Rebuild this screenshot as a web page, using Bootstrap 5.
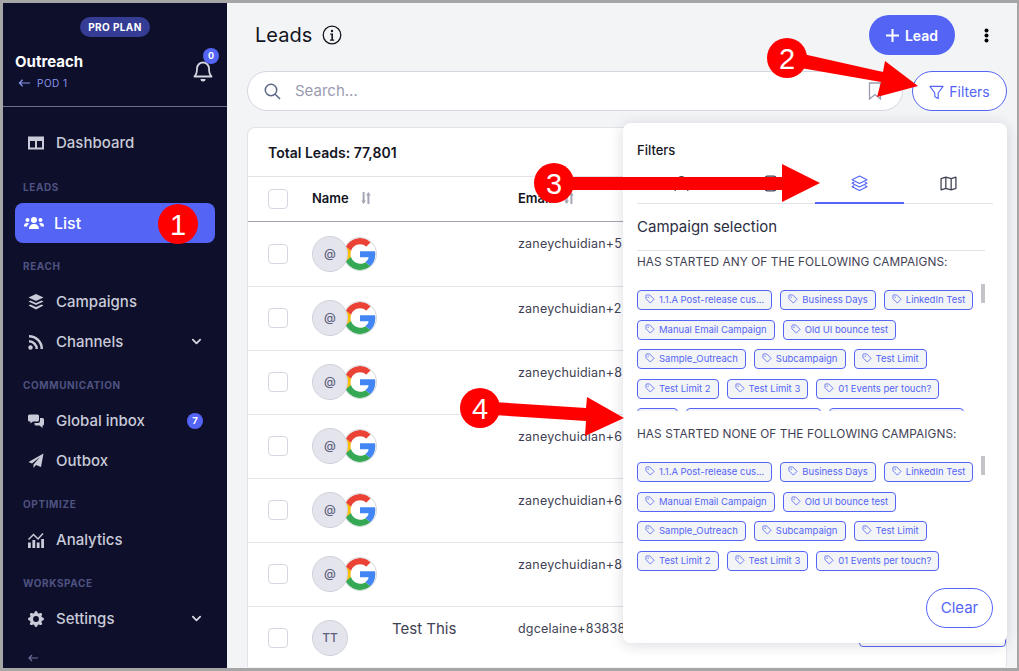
<!DOCTYPE html>
<html lang="en">
<head>
  <meta charset="UTF-8" />
  <meta name="viewport" content="width=device-width, initial-scale=1" />
  <title>Leads</title>
  <link href="https://cdn.jsdelivr.net/npm/bootstrap@5.3.3/dist/css/bootstrap.min.css" rel="stylesheet">
  <style>
    html, body { height: 100%; }
    body {
      font-family: Inter, "Liberation Sans", sans-serif;
      background-color: #a6a6a6;
      padding: 3px 2px 3px 3px;
      overflow: hidden;
      color: #14151f;
    }

    .app-frame { height: 665px; position: relative; overflow: hidden; background: #f3f4f6; }
    .symbol-sheet { position: absolute; width: 0; height: 0; }

    /* sidebar */
    .side-bar { width: 224px; flex: none; background: #0d0f2b; color: #c9cbd8; }
    .plan-pill {
      background: #343c94; color: #fff; font-size: 10px; font-weight: 700; letter-spacing: .4px;
      width: 70px; height: 20px; border-radius: 10px; margin-top: 14px;
    }
    .org-head { height: 70px; padding: 15px 12px 0 12px; border-bottom: 1px solid #6d6f84; margin-bottom: 1px; }
    .org-name { font-size: 15px; font-weight: 700; color: #fff; line-height: 20px; }
    .org-pod { font-size: 10px; color: #8a94ea; letter-spacing: .5px; line-height: 14px; margin-top: 4px; padding-left: 3px; }
    .org-pod svg { width: 13px; height: 10px; margin-right: 6px; }
    .bell-wrap { position: relative; width: 20px; height: 22px; margin: 9px 2px 0 0; }
    .bell-wrap svg { width: 20px; height: 22px; display: block; }
    .bell-count {
      position: absolute; top: -13px; right: -6px; width: 16px; height: 16px; border-radius: 50%;
      background: #5465f6; color: #fff; font-size: 9px; font-weight: 700; line-height: 16px; text-align: center;
    }
    .side-nav { padding: 15px 12px 0 12px; }
    .side-item {
      height: 40px; border-radius: 8px; padding: 0 12px 0 13px; font-size: 15px; font-weight: 500;
      gap: 12px; color: #c9cbd8;
    }
    .side-item > svg:first-child { width: 16px; height: 16px; flex: none; fill: #c9cbd8; }
    .side-item.is-active { background: #5465f6; color: #fff; font-size: 16px; }
    .side-item.is-active > svg:first-child { fill: #fff; width: 20px; margin-left: -4px; margin-right: -2px; }
    .side-item.is-first { margin-bottom: 1px; }
    .side-label {
      height: 39px; padding: 17px 0 0 8px; font-size: 10px; font-weight: 700; letter-spacing: .6px;
      color: #4f5380; line-height: 12px;
    }
    .side-chev { width: 11px; height: 8px; margin-left: auto; margin-right: 1px; }
    .side-count {
      margin-left: auto; width: 16px; height: 16px; border-radius: 50%; background: #5465f6; color: #fff;
      font-size: 9.500px; font-weight: 700; line-height: 16px; text-align: center;
    }
    .side-back { width: 10px; height: 8px; margin: 15px 0 0 13px; display: block; }

    /* main */
    .main-area { flex: 1; min-width: 0; padding: 12px 10px 0 20px; }
    .page-title { font-size: 20px; font-weight: 400; margin: 0 0 0 8px; }
    .info-icon { width: 20px; height: 20px; margin-left: 10px; }
    .lead-btn {
      background: #5465f6; color: #fff; border: 0; border-radius: 20px; width: 86px; height: 40px;
      font-size: 14px; font-weight: 600; padding: 0;
    }
    .lead-btn svg { width: 13px; height: 13px; margin-right: 6px; vertical-align: -1px; }
    .dots-icon { width: 5px; height: 15px; margin: 0 18px 0 29px; }
    .search-box {
      height: 40px; width: 656px; background: #fff; border: 1px solid #d5d7e0; border-radius: 20px;
      padding: 0 16px; gap: 14px; color: #9a9cb0; font-size: 15px;
    }
    .search-box > svg:first-child { width: 17px; height: 17px; }
    .mark-icon { width: 14px; height: 18px; margin-left: auto; margin-right: 4px; }
    .filters-btn {
      height: 40px; width: 95px; border: 1px solid #5465f6; border-radius: 20px; background: #fff;
      color: #5465f6; font-size: 14px; padding: 0; margin-left: 9px;
    }
    .filters-btn svg { width: 15px; height: 15px; margin-right: 5px; vertical-align: -3px; }
    .leads-card {
      background: #fff; border: 1px solid #e2e3e9; border-bottom: 0; border-radius: 8px 8px 0 0;
      margin-top: 16px; height: 540px; overflow: hidden;
    }
    .total-row { height: 49px; padding: 0 20px; font-size: 14px; font-weight: 600; line-height: 49px; border-bottom: 1px solid #e2e3e9; }
    .leads-table { table-layout: fixed; margin: 0; color: #3f4254; }
    .leads-table th, .leads-table td { padding: 0; border-bottom: 1px solid #e2e3e9; box-shadow: none; }
    .leads-table thead tr { height: 44px; }
    .leads-table thead th { font-size: 13px; font-weight: 600; color: #14151f; vertical-align: middle; border-bottom-color: #a3a5b4; }
    .leads-table tbody tr { height: 64px; }
    .leads-table tbody tr:first-child { height: 65px; }
    .leads-table tbody td { vertical-align: middle; }
    .check-cell { padding-left: 20px !important; }
    .fake-check { display: block; width: 20px; height: 20px; border: 1px solid #d5d7e0; border-radius: 4px; background: #fff; }
    .sort-icon { width: 10px; height: 12px; margin-left: 12px; vertical-align: -1px; }
    .avatar-pair { display: flex; align-items: center; }
    .avatar-ring {
      width: 36px; height: 36px; border-radius: 50%; background: #e4e5ec; border: 1px solid #cfd1db; color: #5e6080;
      font-size: 12px; font-weight: 500; display: flex; align-items: center; justify-content: center; position: relative; z-index: 1; flex: none;
    }
    .google-ring { width: 34px; height: 34px; border-radius: 50%; background: #fff; border: 1px solid #d5d7e0; margin-left: -5px; flex: none; overflow: hidden; }
    .google-ring svg { display: block; width: 32px; height: 32px; }
    .leads-table tbody td.mail-cell { vertical-align: top; padding-top: 14px; font-size: 12.500px; letter-spacing: .2px; line-height: 16px; white-space: nowrap; }
    .lead-name { font-size: 15px; margin-left: 44px; color: #3f4254; margin-top: -17px; }
    .stage-box { display: block; height: 32px; border: 1px solid #5465f6; border-radius: 4px; margin-top: -14px; }

    /* filters panel */
    .filter-panel {
      position: absolute; left: 620px; top: 120px; width: 384px; height: 520px; background: #fff; border-radius: 8px;
      box-shadow: 0 2px 14px rgba(30, 32, 60, .16); padding: 18px 14px 0 14px;
    }
    .panel-title { font-size: 13px; font-weight: 500; line-height: 18px; }
    .panel-tabs { height: 41px; margin-top: 4px; border-bottom: 1px solid #e2e3e9; width: 356px; }
    .panel-tab { width: 89px; display: flex; justify-content: center; align-items: center; height: 41px; border-bottom: 2px solid transparent; padding-top: 1px; }
    .panel-tab svg { width: 17px; height: 17px; }
    .panel-tab.is-on { border-bottom-color: #5465f6; }
    .panel-head { font-size: 15px; line-height: 20px; height: 47px; padding-top: 13px; width: 348px; border-bottom: 1px solid #e2e3e9; color: #2c2e42; }
    .panel-sub { font-size: 11.800px; line-height: 14px; color: #3f4254; letter-spacing: .1px; text-transform: uppercase; }
    .tag-scroll { position: relative; width: 348px; overflow: hidden; }
    .tag-scroll.is-first { height: 133px; margin-top: 9px; padding-top: 12px; }
    .tag-scroll.is-second { height: 125px; margin-top: 8px; padding-top: 13px; }
    .tag-grid { display: flex; flex-wrap: wrap; gap: 9.600px 8px; width: 340px; }
    .tag-chip {
      height: 20px; border: 1px solid #5465f6; border-radius: 4px; background: #f3f4f6; color: #5465f6;
      font-size: 9.500px; line-height: 18px; padding: 0 7px; white-space: nowrap;
    }
    .tag-chip svg { width: 10px; height: 10px; margin-right: 4px; vertical-align: -1px; }
    .tag-chip.is-blank-s { width: 41px; }
    .tag-chip.is-blank-l { width: 135px; }
    .scroll-thumb { position: absolute; right: 0; top: 6px; width: 4px; height: 19px; background: #c3c4c9; }
    .is-second .scroll-thumb { top: 7px; }
    .clear-btn {
      position: absolute; right: 14px; bottom: 15px; width: 67px; height: 40px; border: 1px solid #5465f6; border-radius: 20px;
      background: #fff; color: #5465f6; font-size: 15px; padding: 0;
    }

    /* callouts drawn on top of the screenshot */
    .callout-layer { position: absolute; left: 0; top: 0; width: 1014px; height: 665px; pointer-events: none; }
    .callout-layer text { font-family: "Liberation Sans", sans-serif; font-size: 29px; fill: #fff; text-anchor: middle; }
  </style>
</head>
<body>

<svg class="symbol-sheet">
  <symbol id="ic-tag" viewBox="0 0 16 16"><path fill="none" stroke="currentColor" stroke-width="1.300" d="M1.500 2.500v5l7 7 6-6-7-7h-5a1 1 0 0 0-1 1z"/><circle cx="5" cy="5" r="1" fill="currentColor"/></symbol>
  <symbol id="ic-chev" viewBox="0 0 12 8"><path fill="none" stroke="#d3d5e0" stroke-width="2" stroke-linecap="round" stroke-linejoin="round" d="M2 1.500 6 5.500 10 1.500"/></symbol>
  <symbol id="ic-sort" viewBox="0 0 10 12"><path fill="#a3a5b4" d="M1.600 0h2v8.500h1.400L2.600 12 .2 8.500h1.400zM6.400 12h2V3.500h1.400L7.400 0 5 3.500h1.400z"/></symbol>
  <symbol id="ic-google" viewBox="0 0 48 48">
    <path fill="#EA4335" d="M24 9.500c3.540 0 6.710 1.220 9.210 3.600l6.850-6.850C35.900 2.380 30.470 0 24 0 14.620 0 6.510 5.380 2.560 13.220l7.980 6.190C12.430 13.720 17.740 9.500 24 9.500z"/>
    <path fill="#4285F4" d="M46.980 24.550c0-1.570-.15-3.090-.38-4.550H24v9.020h12.940c-.58 2.960-2.260 5.480-4.780 7.180l7.730 6c4.510-4.180 7.090-10.360 7.090-17.650z"/>
    <path fill="#FBBC05" d="M10.530 28.590c-.48-1.450-.76-2.990-.76-4.590s.27-3.140.76-4.590l-7.980-6.190C.92 16.460 0 20.120 0 24c0 3.880.92 7.540 2.560 10.780l7.970-6.190z"/>
    <path fill="#34A853" d="M24 48c6.480 0 11.930-2.130 15.890-5.810l-7.730-6c-2.150 1.450-4.920 2.300-8.160 2.300-6.260 0-11.570-4.220-13.470-9.910l-7.980 6.190C6.510 42.620 14.620 48 24 48z"/>
  </symbol>
</svg>

<div class="app-frame d-flex">

  <!-- Sidebar -->
  <aside class="side-bar d-flex flex-column">
    <div class="d-flex justify-content-center">
      <div class="plan-pill d-flex align-items-center justify-content-center">PRO PLAN</div>
    </div>
    <div class="org-head d-flex justify-content-between align-items-start">
      <div>
        <div class="org-name">Outreach</div>
        <div class="org-pod d-flex align-items-center">
          <svg viewBox="0 0 14 10"><path fill="none" stroke="#8a94ea" stroke-width="1.300" d="M13 5H1.500M5 1.500 1.500 5 5 8.500"/></svg>POD 1
        </div>
      </div>
      <div class="bell-wrap">
        <svg viewBox="0 0 20 22"><path fill="none" stroke="#d3d5e0" stroke-width="1.800" stroke-linejoin="round" d="M10 1.500a6 6 0 0 0-6 6c0 5-1.500 7-2.500 8h17c-1-1-2.500-3-2.500-8a6 6 0 0 0-6-6z"/><path fill="#d3d5e0" d="M7.500 18h5a2.500 2.500 0 0 1-5 0z"/></svg>
        <span class="bell-count">0</span>
      </div>
    </div>
    <nav class="side-nav">
      <div class="side-item is-first d-flex align-items-center">
        <svg viewBox="0 0 16 16"><path fill-rule="evenodd" d="M0 1.500h16v13H0zM2 6v6.500h5V6zm7 0v6.500h5V6z"/></svg>Dashboard
      </div>
      <div class="side-label">LEADS</div>
      <div class="side-item is-active d-flex align-items-center">
        <svg viewBox="0 0 20 16"><circle cx="10" cy="5" r="3"/><circle cx="3.500" cy="5" r="2"/><circle cx="16.500" cy="5" r="2"/><path d="M5 14c0-3 2-5 5-5s5 2 5 5zM0 11c0-2 1-3 3-3 1 0 1.500.3 2 .7C3.800 9.500 3.300 10.500 3.100 11.500H0zM20 11c0-2-1-3-3-3-1 0-1.500.3-2 .7 1.200.8 1.700 1.800 1.900 2.800H20z"/></svg>List
      </div>
      <div class="side-label">REACH</div>
      <div class="side-item d-flex align-items-center">
        <svg viewBox="0 0 16 16"><path d="M8 0 15.500 3.500 8 7 .5 3.500z"/><path d="M2.500 6.500 8 9l5.500-2.500 2 1L8 11 .5 7.500z"/><path d="M2.500 10.500 8 13l5.500-2.500 2 1L8 15.500.5 11.500z"/></svg>Campaigns
      </div>
      <div class="side-item d-flex align-items-center">
        <svg viewBox="0 0 16 16"><circle cx="2.500" cy="13.500" r="2.200"/><path d="M1 1v2.500A11.500 11.500 0 0 1 12.500 15H15A14 14 0 0 0 1 1z"/><path d="M1 6v2.500A6.500 6.500 0 0 1 7.500 15H10A9 9 0 0 0 1 6z"/></svg>Channels
        <svg class="side-chev"><use href="#ic-chev"/></svg>
      </div>
      <div class="side-label">COMMUNICATION</div>
      <div class="side-item d-flex align-items-center">
        <svg viewBox="0 0 16 16"><path d="M1.500 1.500h8a1.500 1.500 0 0 1 1.500 1.500v4a1.500 1.500 0 0 1-1.500 1.500H5L2.500 10.500V8.500h-1A1.500 1.500 0 0 1 0 7V3a1.500 1.500 0 0 1 1.500-1.500z"/><path d="M12 5h2.500A1.500 1.500 0 0 1 16 6.500V11a1.500 1.500 0 0 1-1.500 1.500V15l-3-2.500H8A1.500 1.500 0 0 1 6.500 11V10H10a2 2 0 0 0 2-2z"/></svg>Global inbox
        <span class="side-count">7</span>
      </div>
      <div class="side-item d-flex align-items-center">
        <svg viewBox="0 0 16 16"><path d="M15.500.5 13 14l-5-2-2.500 3V11.500L12 4 4 10.500.5 9z"/></svg>Outbox
      </div>
      <div class="side-label">OPTIMIZE</div>
      <div class="side-item d-flex align-items-center">
        <svg viewBox="0 0 16 16"><path d="M0 10.500h2.800V16H0zM4.400 8h2.800v8H4.400zM8.800 10.500h2.800V16H8.800zM13.200 7h2.800v9h-2.800z"/><path fill="none" stroke="#c9cbd8" stroke-width="1.500" d="M.5 7.500 5.500 2.500l4.500 4.500L15 1.500"/></svg>Analytics
      </div>
      <div class="side-label">WORKSPACE</div>
      <div class="side-item d-flex align-items-center">
        <svg viewBox="0 0 16 16"><path d="M9.405 1.050c-.413-1.400-2.397-1.400-2.810 0l-.1.340a1.464 1.464 0 0 1-2.105.872l-.31-.17c-1.283-.698-2.686.705-1.987 1.987l.169.311c.446.820.023 1.841-.872 2.105l-.34.100c-1.400.413-1.400 2.397 0 2.810l.34.100a1.464 1.464 0 0 1 .872 2.105l-.17.310c-.698 1.283.705 2.686 1.987 1.987l.311-.169a1.464 1.464 0 0 1 2.105.872l.1.340c.413 1.400 2.397 1.400 2.810 0l.1-.34a1.464 1.464 0 0 1 2.105-.872l.31.170c1.283.698 2.686-.705 1.987-1.987l-.169-.311a1.464 1.464 0 0 1 .872-2.105l.34-.1c1.400-.413 1.400-2.397 0-2.810l-.34-.1a1.464 1.464 0 0 1-.872-2.105l.17-.31c.698-1.283-.705-2.686-1.987-1.987l-.311.169a1.464 1.464 0 0 1-2.105-.872l-.1-.34zM8 10.930a2.929 2.929 0 1 1 0-5.858 2.929 2.929 0 0 1 0 5.858z"/></svg>Settings
        <svg class="side-chev"><use href="#ic-chev"/></svg>
      </div>
      <svg class="side-back" viewBox="0 0 10 8"><path fill="none" stroke="#6d6f9a" stroke-width="1.200" d="M10 4H1M4 1 1 4l3 3"/></svg>
    </nav>
  </aside>

  <!-- Main -->
  <main class="main-area">
    <div class="d-flex align-items-center">
      <h1 class="page-title">Leads</h1>
      <svg class="info-icon" viewBox="0 0 20 20"><circle cx="10" cy="10" r="8.800" fill="none" stroke="#14151f" stroke-width="1.300"/><circle cx="10" cy="6" r="1.200" fill="#14151f"/><path fill="#14151f" d="M8.200 8.500H11v6h1.200v1.200H8v-1.200h1.400V9.700H8.200z"/></svg>
      <button class="lead-btn ms-auto"><svg viewBox="0 0 13 13"><path fill="none" stroke="#fff" stroke-width="2" d="M6.500 0v13M0 6.500h13"/></svg>Lead</button>
      <svg class="dots-icon" viewBox="0 0 5 15"><circle cx="2.500" cy="2.500" r="2"/><circle cx="2.500" cy="7.500" r="2"/><circle cx="2.500" cy="12.500" r="2"/></svg>
    </div>

    <div class="d-flex mt-3">
      <div class="search-box d-flex align-items-center">
        <svg viewBox="0 0 17 17"><circle cx="7" cy="7" r="5.700" fill="none" stroke="#5b6785" stroke-width="1.500"/><path stroke="#5b6785" stroke-width="1.500" d="M11.200 11.200 16 16"/></svg>
        <span>Search...</span>
        <svg class="mark-icon" viewBox="0 0 14 18"><path fill="none" stroke="#9a9cb0" stroke-width="1.300" d="M1.500 1h11v16L7 12.500 1.500 17z"/></svg>
      </div>
      <button class="filters-btn"><svg viewBox="0 0 16 16"><path fill="none" stroke="#5465f6" stroke-width="1.200" stroke-linejoin="round" d="M1 1.500h14L9.800 8.500v6l-3.600-2V8.500z"/></svg>Filters</button>
    </div>

    <div class="leads-card">
      <div class="total-row">Total Leads: 77,801</div>
      <table class="table leads-table">
        <colgroup>
          <col style="width:64px"><col style="width:206px"><col style="width:341px"><col>
        </colgroup>
        <thead>
          <tr>
            <th class="check-cell"><span class="fake-check"></span></th>
            <th>Name<svg class="sort-icon"><use href="#ic-sort"/></svg></th>
            <th>Email<svg class="sort-icon"><use href="#ic-sort"/></svg></th>
            <th></th>
          </tr>
        </thead>
        <tbody id="leadRows"></tbody>
      </table>
    </div>
  </main>

  <!-- Filters dropdown -->
  <div class="filter-panel">
    <div class="panel-title">Filters</div>
    <div class="panel-tabs d-flex">
      <div class="panel-tab"><svg viewBox="0 0 16 16"><circle cx="8" cy="5" r="3.500" fill="none" stroke="#3f4254" stroke-width="1.200"/><path fill="none" stroke="#3f4254" stroke-width="1.200" d="M2 15c0-3 2.500-5 6-5s6 2 6 5"/></svg></div>
      <div class="panel-tab"><svg viewBox="0 0 16 16"><rect x="3" y="1" width="10" height="14" rx="2" fill="none" stroke="#3f4254" stroke-width="1.200"/></svg></div>
      <div class="panel-tab is-on"><svg viewBox="0 0 16 16"><g fill="none" stroke="#5465f6" stroke-width="1.100" stroke-linejoin="round"><path d="M8 1 15 4.500 8 8 1 4.500z"/><path d="M3 6.500 1 7.800 8 11.300l7-3.500-2-1.300"/><path d="M3 9.800 1 11.100 8 14.600l7-3.500-2-1.300"/></g></svg></div>
      <div class="panel-tab"><svg viewBox="0 0 16 16"><path fill="none" stroke="#3f4254" stroke-width="1.200" stroke-linejoin="round" d="M1 3.500 5.500 2l5 1.500L15 2v10.500L10.500 14l-5-1.500L1 14zM5.500 2v10.500M10.500 3.500V14"/></svg></div>
    </div>
    <div class="panel-head">Campaign selection</div>
    <div class="panel-sub mt-1">Has started any of the following campaigns:</div>
    <div class="tag-scroll is-first">
      <div class="tag-grid" data-tags="1"></div>
      <span class="scroll-thumb"></span>
    </div>
    <div class="panel-sub mt-3">Has started none of the following campaigns:</div>
    <div class="tag-scroll is-second">
      <div class="tag-grid" data-tags="0"></div>
      <span class="scroll-thumb"></span>
    </div>
    <button class="clear-btn">Clear</button>
  </div>

  <!-- Annotations -->
  <svg class="callout-layer" viewBox="0 0 1014 665">
    <circle cx="175" cy="221" r="20" fill="#f00"/><text x="175" y="232">1</text>

    <path fill="#f00" d="M800 51 880 69 882 58 915 83 874 94 878 79 798 65z"/>
    <circle cx="784" cy="55" r="20" fill="#f00"/><text x="784" y="66">2</text>

    <path fill="#f00" d="M565 174H779V161L817 180 779 199V187H565z"/>
    <circle cx="551" cy="180" r="20" fill="#f00"/><text x="551" y="191">3</text>

    <path fill="#f00" d="M490 399 583 405 584 394 621 415 582 433 583 418 490 412z"/>
    <circle cx="477" cy="405" r="20" fill="#f00"/><text x="477" y="416">4</text>
  </svg>
</div>

<script>
  const tagNames = [
    "1.1.A Post-release cus...", "Business Days", "LinkedIn Test", "Manual Email Campaign", "Old UI bounce test",
    "Sample_Outreach", "Subcampaign", "Test Limit", "Test Limit 2", "Test Limit 3", "01 Events per touch?"
  ];

  document.querySelectorAll(".tag-grid").forEach(grid => {
    let html = tagNames.map(t =>
      `<span class="tag-chip"><svg><use href="#ic-tag"/></svg>${t}</span>`).join("");
    // next row is scrolled out, only the tops of the chips show
    if (grid.dataset.tags === "1") {
      html += `<span class="tag-chip is-blank-s"></span><span class="tag-chip is-blank-l"></span><span class="tag-chip is-blank-l"></span>`;
    }
    grid.innerHTML = html;
  });

  const leads = [
    "zaneychuidian+5", "zaneychuidian+2", "zaneychuidian+8",
    "zaneychuidian+6", "zaneychuidian+6", "zaneychuidian+8"
  ];
  const googleCell = `<div class="avatar-pair"><span class="avatar-ring">@</span><span class="google-ring"><svg><use href="#ic-google"/></svg></span></div>`;

  let rows = leads.map(mail => `<tr>
      <td class="check-cell"><span class="fake-check"></span></td>
      <td>${googleCell}</td>
      <td class="mail-cell">${mail}</td>
      <td></td>
    </tr>`).join("");

  rows += `<tr>
      <td class="check-cell"><span class="fake-check"></span></td>
      <td><div class="avatar-pair"><span class="avatar-ring">TT</span><span class="lead-name">Test This</span></div></td>
      <td class="mail-cell">dgcelaine+83838</td>
      <td><span class="stage-box"></span></td>
    </tr>`;
  document.getElementById("leadRows").innerHTML = rows;
</script>

<script src="https://cdn.jsdelivr.net/npm/bootstrap@5.3.3/dist/js/bootstrap.bundle.min.js"></script>
</body>
</html>
